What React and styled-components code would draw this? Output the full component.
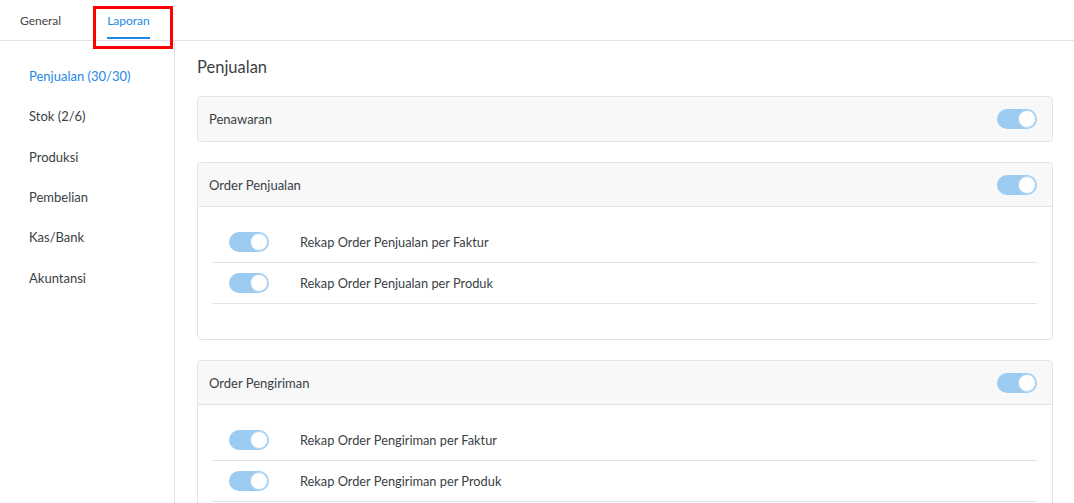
import React from "react";
import styled, { createGlobalStyle } from "styled-components";

const GlobalStyle = createGlobalStyle`
  body {
    margin: 0;
    background: #fff;
    font-family: "Source Sans Pro", "Lato", "Noto Sans", sans-serif;
    color: #3a3f45;
  }
`;

const Page = styled.div`
  width: 1074px;
  height: 503px;
  overflow: hidden;
  position: relative;
`;

const TabBar = styled.div`
  display: flex;
  height: 40px;
  border-bottom: 1px solid #e2e2e2;
  padding-left: 20px;
  gap: 46px;
`;

const Tab = styled.div`
  position: relative;
  display: flex;
  align-items: center;
  font-size: 12px;
  color: ${(p) => (p.$active ? "#1e88e5" : "#444")};

  &::after {
    content: "";
    display: ${(p) => (p.$active ? "block" : "none")};
    position: absolute;
    left: 0;
    right: 0;
    bottom: 1px;
    height: 2px;
    background: #1e88e5;
  }
`;

const Highlight = styled.div`
  position: absolute;
  left: 93px;
  top: 6px;
  width: 80px;
  height: 43px;
  box-sizing: border-box;
  border: 3px solid #f00;
  pointer-events: none;
`;

const Body = styled.div`
  display: flex;
`;

const Sidebar = styled.div`
  width: 175px;
  flex-shrink: 0;
  border-right: 1px solid #e2e2e2;
  height: 462px;
  padding-top: 15px;
  box-sizing: border-box;
`;

const SideItem = styled.div`
  height: 40.3px;
  display: flex;
  align-items: center;
  padding-left: 29px;
  font-size: 13px;
  color: ${(p) => (p.$active ? "#1e88e5" : "#3a3f45")};
`;

const Main = styled.div`
  flex: 1;
  padding: 13px 21px 0 22px;
`;

const Title = styled.div`
  font-size: 16.5px;
  color: #3a3f45;
  height: 26px;
  line-height: 26px;
  margin-bottom: 16px;
`;

const Card = styled.div`
  border: 1px solid #e3e3e3;
  border-radius: 4px;
  margin-bottom: 20px;
  background: #fff;
`;

const CardHeader = styled.div`
  display: flex;
  align-items: center;
  justify-content: space-between;
  height: 44px;
  padding: 0 15px 0 11px;
  background: #f8f8f8;
  border-radius: 4px;
  font-size: 13px;
  color: #3a3f45;
  box-sizing: border-box;
  border-bottom: ${(p) => (p.$open ? "1px solid #e3e3e3" : "none")};
  border-bottom-left-radius: ${(p) => (p.$open ? "0" : "4px")};
  border-bottom-right-radius: ${(p) => (p.$open ? "0" : "4px")};
`;

const CardBody = styled.div`
  padding: 15px 15px 35px 14px;
`;

const Row = styled.div`
  display: flex;
  align-items: center;
  height: 40px;
  padding-left: 17px;
  gap: 31px;
  border-bottom: 1px solid #e3e3e3;
  font-size: 12.8px;
  color: #3a3f45;
`;

const Switch = styled.div`
  width: 40px;
  height: 20px;
  border-radius: 10px;
  background: #9ccbf1;
  position: relative;
  flex-shrink: 0;

  &::after {
    content: "";
    position: absolute;
    right: 1px;
    top: 1px;
    width: 16px;
    height: 16px;
    border-radius: 50%;
    background: #fff;
    border: 1px solid #b5d8f4;
  }
`;

const sections = [
  { name: "Penawaran", items: [] },
  {
    name: "Order Penjualan",
    items: ["Rekap Order Penjualan per Faktur", "Rekap Order Penjualan per Produk"],
  },
  {
    name: "Order Pengiriman",
    items: ["Rekap Order Pengiriman per Faktur", "Rekap Order Pengiriman per Produk"],
  },
];

const menu = ["Penjualan (30/30)", "Stok (2/6)", "Produksi", "Pembelian", "Kas/Bank", "Akuntansi"];

const App = () => {
  return (
    <Page>
      <GlobalStyle />
      <TabBar>
        <Tab>General</Tab>
        <Tab $active>Laporan</Tab>
      </TabBar>
      <Highlight />
      <Body>
        <Sidebar>
          {menu.map((m, i) => (
            <SideItem key={m} $active={i === 0}>
              {m}
            </SideItem>
          ))}
        </Sidebar>
        <Main>
          <Title>Penjualan</Title>
          {sections.map((s) => (
            <Card key={s.name}>
              <CardHeader $open={s.items.length > 0}>
                {s.name}
                <Switch />
              </CardHeader>
              {s.items.length > 0 && (
                <CardBody>
                  {s.items.map((item) => (
                    <Row key={item}>
                      <Switch />
                      {item}
                    </Row>
                  ))}
                </CardBody>
              )}
            </Card>
          ))}
        </Main>
      </Body>
    </Page>
  );
};

export default App;
